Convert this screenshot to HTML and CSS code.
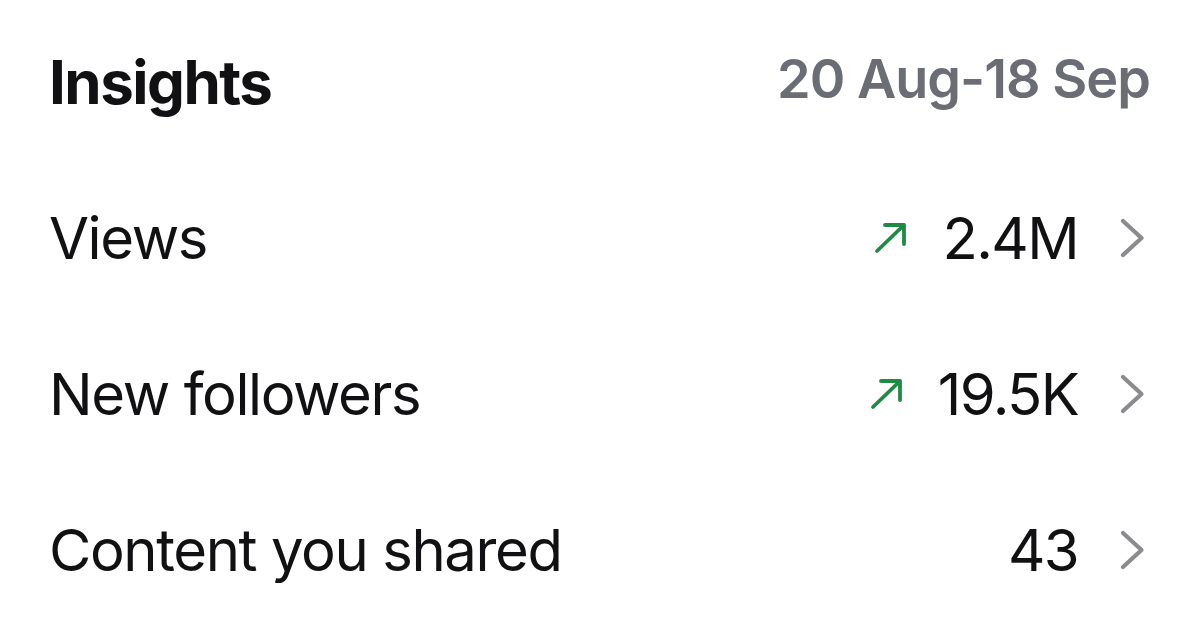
FILE: index.html
```html
<!DOCTYPE html>
<html lang="en">
<head>
    <meta charset="UTF-8">
    <title>Insights</title>
    <meta name="viewport" content="width=device-width, initial-scale=1.0">
    <link rel="stylesheet" href="styles.css">
</head>
<body>
    <div class="insights">
        <div class="insights-head">
            <h1>Insights</h1>
            <span class="range">20 Aug-18 Sep</span>
        </div>

        <div class="stat-row">
            <span class="label">Views</span>
            <div class="value">
                <svg class="trend" viewBox="0 0 34 32" aria-hidden="true">
                    <path d="M3 29 L30 3 M11 3 H30 V22" />
                </svg>
                <span class="num">2.4M</span>
                <svg class="chevron" viewBox="0 0 25 40" aria-hidden="true">
                    <path d="M3 3 L21.5 20 L3 37" />
                </svg>
            </div>
        </div>

        <div class="stat-row">
            <span class="label">New followers</span>
            <div class="value">
                <svg class="trend" viewBox="0 0 34 32" aria-hidden="true">
                    <path d="M3 29 L30 3 M11 3 H30 V22" />
                </svg>
                <span class="num">19.5K</span>
                <svg class="chevron" viewBox="0 0 25 40" aria-hidden="true">
                    <path d="M3 3 L21.5 20 L3 37" />
                </svg>
            </div>
        </div>

        <div class="stat-row">
            <span class="label">Content you shared</span>
            <div class="value">
                <span class="num">43</span>
                <svg class="chevron" viewBox="0 0 25 40" aria-hidden="true">
                    <path d="M3 3 L21.5 20 L3 37" />
                </svg>
            </div>
        </div>
    </div>
</body>
</html>
```

FILE: styles.css
```css
:root {
    --text: #111113;
    --fade: #6a6d74;
    --chevron: #8b8b8f;
    --up: #1e8b45;
}
html, body {
    margin: 0; padding: 0;
    background: #fff;
    color: var(--text);
    font-family: Inter, 'Liberation Sans', Arial, sans-serif;
}
.insights {
    padding: 4px 55px 0 49px;
}
.insights-head {
    display: flex;
    align-items: center;
    justify-content: space-between;
    height: 156px;
}
.insights-head h1 {
    margin: 0;
    font-size: 60px;
    font-weight: 700;
    letter-spacing: -1.5px;
}
.range {
    margin: 0 -5px 8px 0;
    color: var(--fade);
    font-size: 54px;
    font-weight: 600;
    letter-spacing: -1px;
}
.stat-row {
    display: flex;
    align-items: center;
    justify-content: space-between;
    height: 156px;
}
.label {
    font-size: 58px;
    font-weight: 400;
    letter-spacing: -1.4px;
}
.value {
    display: flex;
    align-items: center;
}
.num {
    font-size: 58px;
    font-weight: 400;
    letter-spacing: -1.6px;
}
.trend {
    width: 34px;
    height: 32px;
    margin-right: 34px;
    fill: none;
    stroke: var(--up);
    stroke-width: 3.8;
    stroke-linecap: round;
    stroke-linejoin: round;
}
.chevron {
    width: 25px;
    height: 40px;
    margin-left: 42px;
    fill: none;
    stroke: var(--chevron);
    stroke-width: 4.2;
    stroke-linecap: round;
    stroke-linejoin: round;
}
```
